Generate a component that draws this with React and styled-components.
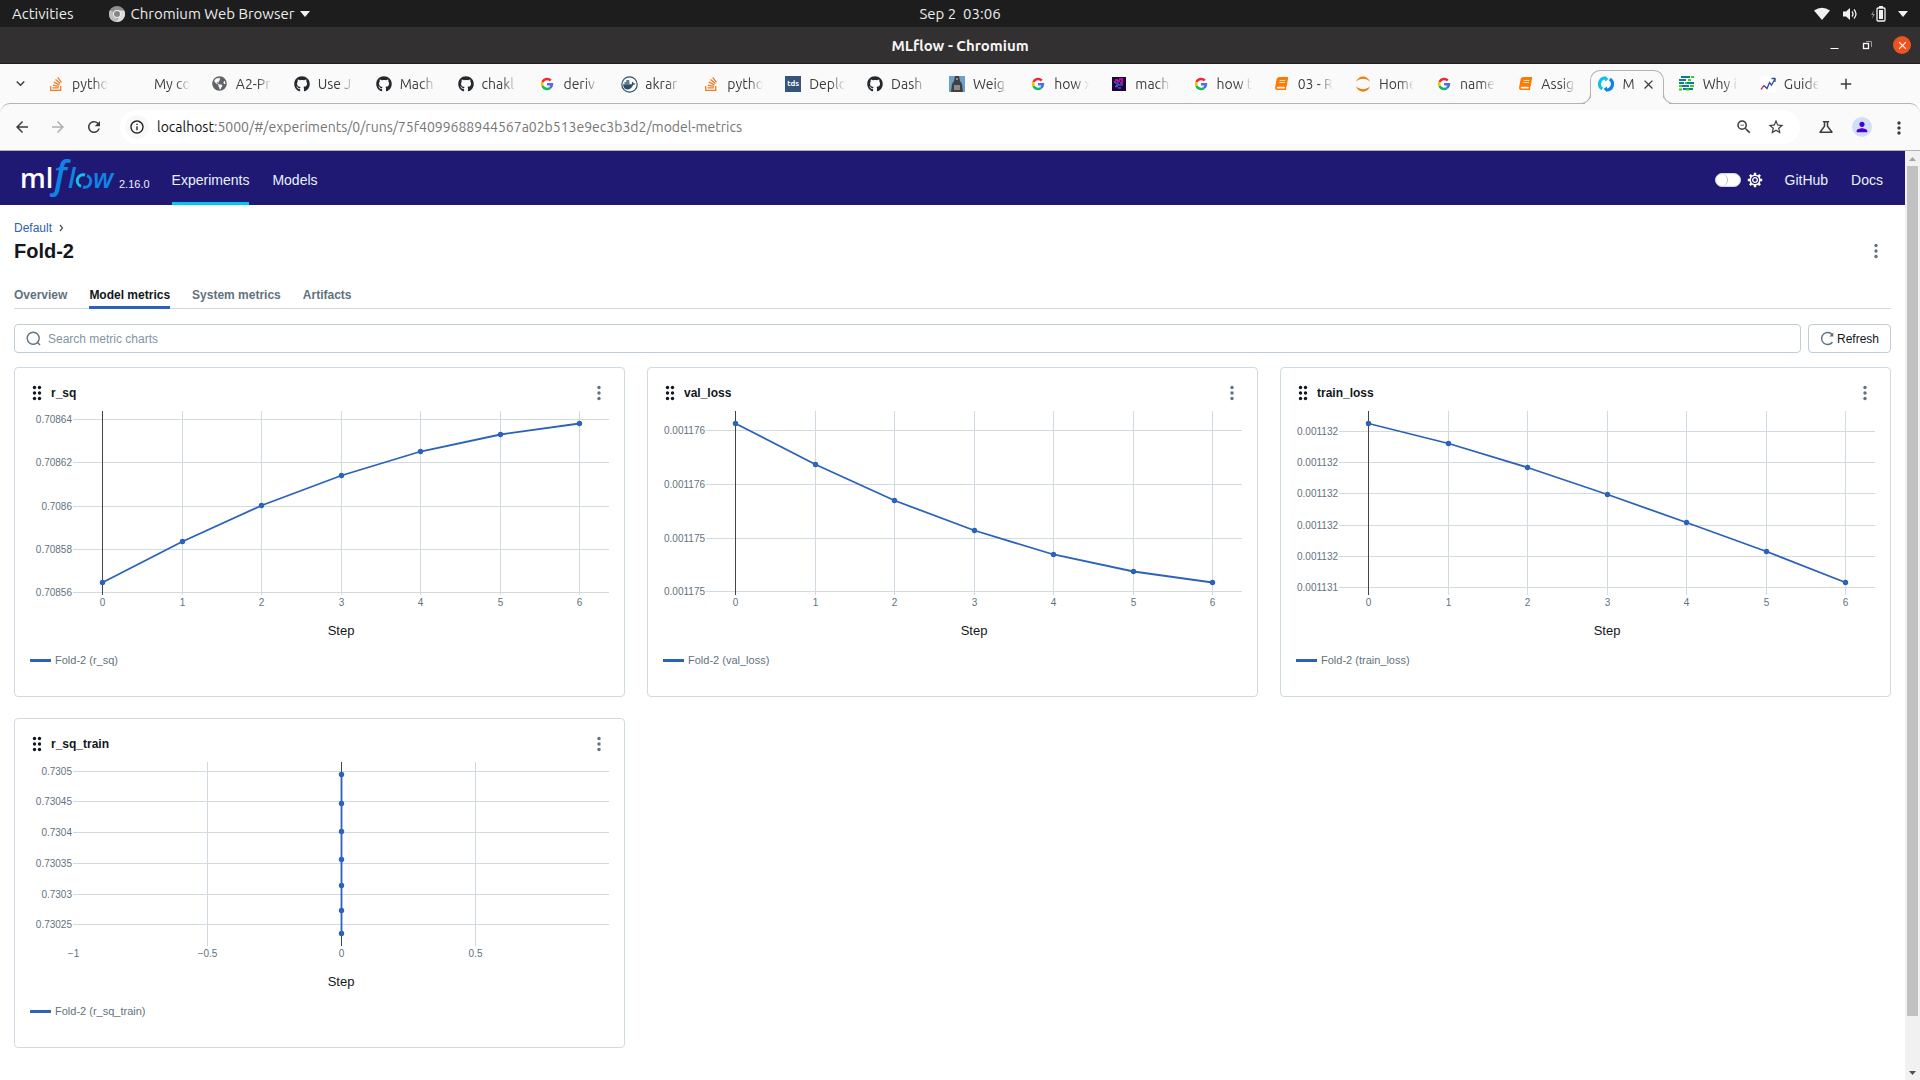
import React, { useLayoutEffect, useRef, useState } from "react";
import styled, { createGlobalStyle, css } from "styled-components";
import { FaStackOverflow, FaGithub, FaGlobeAmericas, FaBook } from "react-icons/fa";
import {
  MdArrowBack, MdArrowForward, MdRefresh, MdInfoOutline, MdZoomOut, MdStarOutline,
  MdOutlineScience, MdPerson, MdMoreVert, MdKeyboardArrowDown, MdAdd, MdClose,
} from "react-icons/md";

const systemFont = `"Ubuntu", "Open Sans", "Noto Sans", sans-serif`;
const pageFont = `"Liberation Sans", Arial, sans-serif`;

const color = {
  chrome: "#fafafa",
  chromeLine: "#b3b3b3",
  nav: "#201974",
  line: "#d1d9e1",
  field: "#c0cdd8",
  blue: "#2b62ba",
  text: "#11171c",
  muted: "#5f7281",
};

const GlobalStyle = createGlobalStyle`
  *, *::before, *::after { box-sizing: border-box; }
  body { margin: 0; background: #fff; }
  button { border: 0; margin: 0; padding: 0; background: none; font: inherit; color: inherit; cursor: pointer; }
  a { text-decoration: none; color: inherit; }
  h1, h2 { margin: 0; }
  svg { display: block; flex: none; }
`;

const Screen = styled.div`
  display: flex;
  flex-direction: column;
  height: 100vh;
  overflow: hidden;
  font-family: ${systemFont};
`;

/* ---------- desktop bar ---------- */

const DesktopBar = styled.div`
  display: grid;
  grid-template-columns: 1fr auto 1fr;
  align-items: center;
  height: 27px;
  flex: none;
  padding: 0 12px;
  background: #1d1d1d;
  color: #ececec;
  font-size: 15px;
  white-space: pre;
`;

const DesktopSide = styled.div`
  display: flex;
  align-items: center;
  gap: ${(p) => p.$gap}px;
  justify-content: ${(p) => (p.$end ? "flex-end" : "flex-start")};
`;

const AppMenu = styled.button`
  display: flex;
  align-items: center;
  gap: 6px;
`;

const WindowBar = styled.div`
  display: grid;
  grid-template-columns: 1fr auto 1fr;
  align-items: center;
  height: 37px;
  flex: none;
  background: #333031;
  border-bottom: 1px solid #1f1d1e;
  color: #f6f5f4;
  font-size: 15px;
  font-weight: 700;
`;

const WindowButtons = styled.div`
  grid-column: 3;
  display: flex;
  justify-content: flex-end;
  align-items: center;
  gap: 18px;
  padding-right: 9px;
`;

const CloseWindow = styled.button`
  display: grid;
  place-items: center;
  width: 18px;
  height: 18px;
  border-radius: 50%;
  background: #e95420;
  color: #fff;
`;

/* ---------- browser tabs ---------- */

const TabStrip = styled.div`
  display: flex;
  align-items: stretch;
  height: 39px;
  flex: none;
  padding-right: 61px;
  background: ${color.chrome};
  color: #3c3c3c;
  font-size: 14px;
`;

const StripButton = styled.button`
  display: grid;
  place-items: center;
  width: ${(p) => p.$width}px;
  flex: none;
`;

const TabList = styled.div`
  display: flex;
  flex: 1;
  min-width: 0;
`;

const BrowserTab = styled.div`
  position: relative;
  display: flex;
  align-items: center;
  flex: 81 1 0;
  min-width: 0;
  margin: 6px 7px 0 0;
  padding: 0 7px 6px 8px;
  &:nth-child(-n + 11) { flex-grow: 82; }
  ${(p) => p.$active && css`
    z-index: 1;
    margin-bottom: -1px;
    padding: 0 5px 7px 7px;
    background: ${color.chrome};
    border: 1px solid ${color.chromeLine};
    border-bottom: 0;
    border-radius: 10px 10px 0 0;
    &::before, &::after {
      content: "";
      position: absolute;
      bottom: 0;
      width: 10px;
      height: 10px;
      border-bottom: 1px solid ${color.chromeLine};
    }
    &::before {
      right: 100%;
      border-right: 1px solid ${color.chromeLine};
      border-bottom-right-radius: 10px;
      box-shadow: 4px 4px 0 ${color.chrome};
      clip-path: inset(0 -1px 0 0);
    }
    &::after {
      left: 100%;
      border-left: 1px solid ${color.chromeLine};
      border-bottom-left-radius: 10px;
      box-shadow: -4px 4px 0 ${color.chrome};
      clip-path: inset(0 0 0 -1px);
    }
  `}
`;

const TabButton = styled.button`
  display: flex;
  align-items: center;
  gap: 8px;
  flex: 1;
  min-width: 0;
`;

const Favicon = styled.span`
  display: grid;
  place-items: center;
  width: 16px;
  height: 16px;
  flex: none;
`;

const TabTitle = styled.span`
  flex: 1;
  min-width: 0;
  white-space: nowrap;
  text-align: left;
  mask-image: linear-gradient(to right, #000 60%, transparent 100%);
`;

/* ---------- address bar ---------- */

const Toolbar = styled.div`
  display: flex;
  align-items: center;
  height: 48px;
  flex: none;
  padding: 0 13px 0 13px;
  background: ${color.chrome};
  border-top: 1px solid ${color.chromeLine};
  border-bottom: 1px solid ${color.chromeLine};
  border-radius: 10px 10px 0 0;
  color: #3c3c3c;
`;

const NavButtons = styled.div`
  display: flex;
  gap: 18px;
  padding-right: 17px;
`;

const ToolButtons = styled.div`
  display: flex;
  align-items: center;
  gap: 17px;
  padding-left: 17px;
`;

const IconButton = styled.button`
  display: grid;
  place-items: center;
  width: 18px;
  height: 18px;
  color: ${(p) => p.$color || "inherit"};
`;

const AddressBox = styled.div`
  display: flex;
  align-items: center;
  gap: 14px;
  flex: 1;
  height: 34px;
  padding: 0 15px 0 5px;
  border-radius: 17px;
  background: #fff;
`;

const InfoButton = styled.button`
  display: grid;
  place-items: center;
  width: 24px;
  height: 24px;
  border-radius: 50%;
  background: #f8f8f8;
  color: #1f1f1f;
`;

const Address = styled.div`
  flex: 1;
  margin-left: -6px;
  font-size: 14px;
  color: #757575;
  b { font-weight: 400; color: #111; }
`;

const Profile = styled.button`
  display: grid;
  place-items: center;
  width: 20px;
  height: 20px;
  border-radius: 50%;
  background: #d3defc;
  color: #4300d0;
`;

/* ---------- page ---------- */

const Viewport = styled.div`
  display: flex;
  flex: 1;
  min-height: 0;
  font-family: ${pageFont};
  font-size: 12px;
  color: ${color.text};
`;

const Page = styled.div`
  flex: 1;
  min-width: 0;
  overflow: hidden;
`;

const Header = styled.header`
  display: flex;
  align-items: stretch;
  height: 54px;
  padding: 0 22px 0 20px;
  background: ${color.nav};
  color: #e7f1fb;
  font-size: 14px;
`;

const Brand = styled.a`
  display: flex;
  align-items: center;
  gap: 3px;
`;

const Version = styled.span`
  padding-top: 11px;
  font-size: 11px;
`;

const HeaderLinks = styled.nav`
  display: flex;
  gap: 23px;
  padding-left: 22px;
  margin-right: ${(p) => (p.$end ? 0 : "auto")};
`;

const HeaderLink = styled.a`
  display: flex;
  align-items: center;
  padding-top: 6px;
  border-bottom: 3px solid ${(p) => (p.$active ? "#00c8f0" : "transparent")};
`;

const ThemeSwitch = styled.label`
  display: flex;
  align-items: center;
  gap: 6px;
  padding-top: 4px;
`;

const Switch = styled.input`
  appearance: none;
  width: 26px;
  height: 14px;
  margin: 0;
  border-radius: 7px;
  background: #fff;
  border: 1px solid #c9d5e0;
  &::before {
    content: "";
    display: block;
    width: 12px;
    height: 12px;
    border-radius: 50%;
    border-right: 1px solid #b4c0d0;
  }
`;

const Body = styled.main`
  padding: 15px 14px 32px 14px;
`;

const Breadcrumb = styled.nav`
  display: flex;
  align-items: center;
  gap: 5px;
  height: 16px;
  color: ${color.blue};
`;

const TitleRow = styled.div`
  display: flex;
  align-items: center;
  justify-content: space-between;
  height: 30px;
  padding-right: 8px;
`;

const Title = styled.h1`
  font-size: 20px;
  line-height: 24px;
`;

const PageTabs = styled.nav`
  display: flex;
  gap: 22px;
  margin-top: 17px;
  height: 26px;
  border-bottom: 1px solid ${color.line};
`;

const PageTab = styled.a`
  height: 26px;
  padding-top: 5px;
  line-height: 14px;
  font-weight: 700;
  color: ${(p) => (p.$active ? color.text : color.muted)};
  border-bottom: 3px solid ${(p) => (p.$active ? color.blue : "transparent")};
`;

const Controls = styled.div`
  display: flex;
  gap: 7px;
  margin: 15px 0 14px;
`;

const SearchField = styled.label`
  display: flex;
  align-items: center;
  gap: 7px;
  flex: 1;
  height: 29px;
  padding: 0 11px;
  border: 1px solid ${color.field};
  border-radius: 4px;
`;

const SearchInput = styled.input`
  flex: 1;
  min-width: 0;
  padding: 0;
  border: 0;
  outline: 0;
  background: none;
  font: inherit;
  color: ${color.text};
  &::placeholder { color: #8396a5; opacity: 1; }
`;

const RefreshButton = styled.button`
  display: flex;
  align-items: center;
  gap: 2px;
  height: 29px;
  padding: 0 11px;
  border: 1px solid ${color.field};
  border-radius: 4px;
`;

const ChartGrid = styled.div`
  display: grid;
  grid-template-columns: repeat(3, minmax(0, 1fr));
  gap: 21px 22px;
`;

const Card = styled.section`
  padding-bottom: 23px;
  border: 1px solid ${color.line};
  border-radius: 4px;
`;

const CardHeader = styled.div`
  display: flex;
  align-items: center;
  gap: 6px;
  height: 43px;
  padding: 7px 16px 0 14px;
`;

const CardTitle = styled.h2`
  flex: 1;
  font-size: 12px;
  line-height: 16px;
`;

const Plot = styled.div`
  height: 236px;
  overflow: hidden;
`;

const Legend = styled.div`
  display: flex;
  align-items: center;
  gap: 4px;
  height: 26px;
  padding-left: 15px;
  font-size: 11px;
  color: ${color.muted};
`;

const Swatch = styled.span`
  width: 21px;
  height: 3px;
  background: ${color.blue};
`;

/* ---------- scroll bar ---------- */

const ScrollBar = styled.div`
  display: flex;
  flex-direction: column;
  width: 15px;
  flex: none;
  background: #f1f1f1;
`;

const ScrollArrow = styled.div`
  display: grid;
  place-items: center;
  height: 15px;
`;

const Track = styled.div`
  display: flex;
  flex-direction: column;
  flex: 1;
  padding: 0 2px;
`;

const Thumb = styled.div`
  height: 94.6%;
  background: #c1c1c1;
`;

/* ---------- drawings ---------- */

const ChromiumIcon = () => (
  <svg width="16" height="16" viewBox="0 0 16 16">
    <circle cx="8" cy="8" r="8" fill="#8f8f8f" />
    <path d="M8 8 1 4a8 8 0 0 0 5.500 11.900L10 9.500z" fill="#bdbdbd" />
    <path d="M8 4.500h7.200a8 8 0 0 1-8.500 11.400L11 10z" fill="#dcdcdc" />
    <circle cx="8" cy="8" r="3.900" fill="#f0f0f0" />
    <circle cx="8" cy="8" r="3" fill="#858585" />
  </svg>
);

const Caret = ({ fill = "#f2f2f2" }) => (
  <svg width="10" height="6" viewBox="0 0 10 6">
    <path d="M0 0h10L5 6z" fill={fill} />
  </svg>
);

const WifiIcon = () => (
  <svg width="16" height="14" viewBox="0 0 16 14">
    <path d="M0 3.500Q8-2 16 3.500L8 13z" fill="#f2f2f2" />
  </svg>
);

const SoundIcon = () => (
  <svg width="16" height="14" viewBox="0 0 16 14" fill="none" stroke="#f2f2f2">
    <path d="M1 4.500h3L8 1v12L4 9.500H1z" fill="#f2f2f2" stroke="none" />
    <path d="M10 4.500q2 2.500 0 5M12 2.500q4 4.500 0 9" strokeWidth="1.300" />
  </svg>
);

const BatteryIcon = () => (
  <svg width="16" height="16" viewBox="0 0 16 16">
    <path d="M4 4 1 9h2l-1 4 3-5H3z" fill="#8c8c8c" />
    <path d="M9 0h4v2H9z" fill="#f2f2f2" />
    <rect x="7" y="2" width="8" height="13" rx="1" fill="none" stroke="#f2f2f2" strokeWidth="1.300" />
    <rect x="9" y="4" width="4" height="9" fill="#f2f2f2" />
  </svg>
);

const MinimizeIcon = () => (
  <svg width="15" height="15" viewBox="0 0 15 15"><path d="M3.500 10.500h8" stroke="#fff" /></svg>
);

const RestoreIcon = () => (
  <svg width="15" height="15" viewBox="0 0 15 15" fill="none" stroke="#fff">
    <rect x="3.500" y="5.500" width="5" height="5" strokeWidth="1.300" />
    <path d="M6 3.500h5.500V9" stroke="#9b9999" />
  </svg>
);

const GoogleIcon = () => (
  <svg width="16" height="16" viewBox="0 0 16 16" fill="none" strokeWidth="2.600">
    <circle cx="8" cy="8" r="8" fill="#fff" stroke="none" />
    <path d="M11.700 4.500A5 5 0 0 0 3.500 6" stroke="#f4243a" />
    <path d="M3.500 6a5 5 0 0 0 0 4" stroke="#fbbc05" />
    <path d="M3.500 10a5 5 0 0 0 7.500 2" stroke="#0ebc5f" />
    <path d="M11 12a5 5 0 0 0 1.900-3.800H8" stroke="#4a6cf7" />
  </svg>
);

const DockerCircle = () => (
  <svg width="17" height="17" viewBox="0 0 17 17">
    <circle cx="8.500" cy="8.500" r="7.700" fill="#fff" stroke="#2f5069" strokeWidth="1.200" />
    <path d="M2 8.200h8.500c.8-.3.600-1.600.2-2.200 1-.6 1.600.6 1.700 1.300.8-.2 1.600 0 2.100.5-.6.8-1.500 1-2.300 1C11 12 9 13.500 6.500 13.500S2.300 11.500 2 8.200z" fill="#2f5069" />
    <path d="M3.500 6.200h5v1.500h-5zM5.300 4.300h3v1.400h-3z" fill="#2f5069" />
  </svg>
);

const TdsIcon = styled.span`
  display: grid;
  place-items: center;
  width: 16px;
  height: 16px;
  background: #35547c;
  color: #fff;
  font-size: 8px;
  font-weight: 700;
`;

const StatueIcon = () => (
  <svg width="16" height="16" viewBox="0 0 16 16">
    <path fill="#6f9fca" d="M0 0h16v16H0z" />
    <path d="M6 0h4l1 5 2 3 1 8H2l1-8 2-3z" fill="#3f4042" />
    <path d="M5 9h6v5H5z" fill="#8d8a84" />
    <path d="M7 2h2v2H7z" fill="#8d8a84" />
  </svg>
);

const NeonIcon = () => (
  <svg width="14" height="14" viewBox="0 0 14 14">
    <path fill="#1d0636" d="M0 0h14v14H0z" />
    <path d="M3 3h3M7 2h4M2 5h2M5 4h3M9 4h2M8 6h3" stroke="#d815c9" strokeWidth="1.300" />
    <path d="M3 6h4M4 8h5M3 9.500h3M6 11h3M9 8h2" stroke="#3f52d8" strokeWidth="1.300" />
  </svg>
);

const JupyterIcon = () => (
  <svg width="16" height="16" viewBox="0 0 16 16" fill="#f77a0c">
    <path d="M1 6C3-1.500 13-1.500 15 6 11.500 1.800 4.500 1.800 1 6zM1 10c2 7.500 12 7.500 14 0-3.500 4.200-10.500 4.200-14 0z" />
  </svg>
);

const SwirlIcon = () => (
  <svg width="16" height="16" viewBox="0 0 16 16" fill="none" strokeWidth="3.200">
    <path d="M4.200 13A6 6 0 0 1 7.500 2" stroke="#12bfee" />
    <path d="M11.800 3A6 6 0 0 1 8.500 14" stroke="#0f83e6" />
    <path d="M7 0v5.500L10.500 3z" fill="#12bfee" />
    <path d="M9 16v-5.500L5.500 13z" fill="#0f83e6" />
  </svg>
);

const StripesIcon = () => (
  <svg width="15" height="15" viewBox="0 0 15 15" strokeWidth="2">
    <path d="M2 1h9M0 4h7M0 7h5M8 7h7M3 10h7M4 13h10" stroke="#0e7d91" />
    <path d="M12 1h3M9 4h3M6 7h2M0 10h3M11 10h4M0 13.500h3M7 13.500h3" stroke="#2fd22d" />
  </svg>
);

const TrendIcon = () => (
  <svg width="16" height="16" viewBox="0 0 16 16" fill="none" strokeWidth="1.300">
    <path fill="#fff" d="M0 0h16v16H0z" />
    <path d="m1 13.500 3-4" stroke="#d9234c" />
    <path d="m4 9.500 3 3 2.500-6 2 2.500L15 3" stroke="#334a9c" />
    <path d="M11.500 2.500H15V6" stroke="#334a9c" />
  </svg>
);

const Logo = () => (
  <svg width="96" height="42" viewBox="0 0 96 42">
    <g fontFamily="Open Sans, Noto Sans, sans-serif">
      <text x="0" y="31" fontSize="27" fontWeight="600" fill="#fff">ml</text>
      <g fill="#1083e5" fontStyle="italic" fontWeight="600">
        <text x="34" y="31" fontSize="37">f</text>
        <text x="48" y="31" fontSize="27">l</text>
        <text x="73" y="31" fontSize="27">w</text>
      </g>
    </g>
    <g fill="none" strokeWidth="3">
      <path d="M61 29.300A6 6 0 0 1 65 18" stroke="#14c0f0" />
      <path d="M67 18.700A6 6 0 0 1 63 30" stroke="#1083e5" />
    </g>
  </svg>
);

const SunIcon = () => (
  <svg width="16" height="16" viewBox="0 0 16 16" fill="none" stroke="#fff">
    <circle cx="8" cy="8" r="4.800" strokeWidth="1.600" />
    <circle cx="8" cy="8" r="2.300" strokeWidth="1.300" />
    <path d="M8 .8v2.400M8 12.800v2.400M.8 8h2.400M12.800 8h2.400M2.900 2.900l1.700 1.700M11.400 11.400l1.700 1.700M2.900 13.100l1.700-1.700M11.400 4.600l1.700-1.700" strokeWidth="2.400" />
  </svg>
);

const DotsIcon = ({ columns = 1, fill = color.muted }) => (
  <svg width={columns === 2 ? 16 : 14} height="16" viewBox={columns === 2 ? "0 0 16 16" : "0 0 14 16"} fill={fill}>
    {[2.5, 8, 13.5].map((y) =>
      (columns === 2 ? [5.5, 10.5] : [7]).map((x) => <circle key={`${x}-${y}`} cx={x} cy={y} r="1.700" />)
    )}
  </svg>
);

const ChevronIcon = () => (
  <svg width="8" height="8" viewBox="0 0 8 8" fill="none" stroke="#445461" strokeWidth="1.200">
    <path d="m3 1 2.500 3L3 7" />
  </svg>
);

const SearchIcon = () => (
  <svg width="15" height="15" viewBox="0 0 15 15" fill="none" stroke={color.muted} strokeWidth="1.400">
    <circle cx="7.200" cy="7.200" r="6" />
    <path d="m11 11 3 3" />
  </svg>
);

const RefreshIcon = () => (
  <svg width="15" height="15" viewBox="0 0 15 15" fill="none" stroke={color.muted} strokeWidth="1.400">
    <path d="M12.500 11A6 6 0 1 1 12.500 4" />
    <path d="M13.300 1.500v4h-4z" fill={color.muted} stroke="none" />
  </svg>
);

/* ---------- chart ---------- */

const PLOT_HEIGHT = 184;
const PLOT_LEFT = 58;
const PLOT_RIGHT = 15;

function MetricChart({ chart }) {
  const holder = useRef(null);
  const [width, setWidth] = useState(609);

  useLayoutEffect(() => {
    const measure = () => setWidth(Math.floor(holder.current.clientWidth));
    measure();
    const observer = new ResizeObserver(measure);
    observer.observe(holder.current);
    return () => observer.disconnect();
  }, []);

  const right = width - PLOT_RIGHT;
  const [min, max] = chart.domain;
  const x = (v) => PLOT_LEFT + ((v - min) / (max - min)) * (right - PLOT_LEFT);
  const crisp = (v) => Math.floor(v) + 0.5;
  const points = chart.points.map(([px, py]) => [crisp(x(px)), py + 0.5]);

  return (
    <Plot ref={holder}>
      <svg width={width} height="236" fontFamily="Liberation Sans, Arial, sans-serif">
        <g stroke={color.line}>
          {chart.xTicks.filter((t) => t > min).map((t) => (
            <path key={t} d={`M${crisp(x(t))} 0V${PLOT_HEIGHT}`} />
          ))}
          {chart.yTicks.map(([, y]) => (
            <path key={y} d={`M${PLOT_LEFT} ${y + 0.5}H${right}`} />
          ))}
          <path d={`M${crisp(x(0))} 0V${PLOT_HEIGHT}`} stroke="#444" />
        </g>
        <polyline points={points.map((p) => p.join()).join(" ")} fill="none" stroke={color.blue} strokeWidth="1.800" />
        {points.map(([px, py]) => <circle key={py} cx={px} cy={py} r="2.700" fill={color.blue} />)}
        <g fontSize="10" fill={color.muted}>
          {chart.yTicks.map(([label, y]) => (
            <text key={y} x={PLOT_LEFT - 1} y={y + 4} textAnchor="end">{label}</text>
          ))}
          {chart.xTicks.map((t) => (
            <text key={t} x={crisp(x(t))} y="195" textAnchor="middle">{String(t).replace("-", "−")}</text>
          ))}
        </g>
        <text x={(PLOT_LEFT + right) / 2} y="224" fontSize="13" textAnchor="middle" fill={color.text}>Step</text>
      </svg>
    </Plot>
  );
}

const steps = [0, 1, 2, 3, 4, 5, 6];
const stepDomain = [-0.376, 6.37];
const series = (ys) => ys.map((y, i) => [i, y]);

const charts = [
  {
    name: "r_sq", domain: stepDomain, xTicks: steps,
    yTicks: [["0.70864", 8], ["0.70862", 51], ["0.7086", 95], ["0.70858", 138], ["0.70856", 181]],
    points: series([171, 130, 94, 64, 40, 23, 12]),
  },
  {
    name: "val_loss", domain: stepDomain, xTicks: steps,
    yTicks: [["0.001176", 19], ["0.001176", 73], ["0.001175", 127], ["0.001175", 180]],
    points: series([12, 53, 89, 119, 143, 160, 171]),
  },
  {
    name: "train_loss", domain: stepDomain, xTicks: steps,
    yTicks: [["0.001132", 20], ["0.001132", 51], ["0.001132", 82], ["0.001132", 114], ["0.001132", 145], ["0.001131", 176]],
    points: series([12, 32, 56, 83, 111, 140, 171]),
  },
  {
    name: "r_sq_train", domain: [-1, 1], xTicks: [-1, -0.5, 0, 0.5],
    yTicks: [["0.7305", 9], ["0.73045", 39], ["0.7304", 70], ["0.73035", 101], ["0.7303", 132], ["0.73025", 162]],
    points: [12, 41, 69, 97, 123, 148, 171].map((y) => [0, y]),
  },
];

const stack = <FaStackOverflow size={16} color="#f27a24" />;
const github = <FaGithub size={16} color="#24292f" />;
const book = <FaBook size={13} color="#ff7a00" style={{ transform: "skewX(-10deg)" }} />;
const google = <GoogleIcon />;

const browserTabs = [
  ["pytho", stack], ["My co", null], ["A2-Pr", <FaGlobeAmericas size={15} color="#5f6368" />],
  ["Use J", github], ["Mach", github], ["chakl", github], ["deriv", google],
  ["akrar", <DockerCircle />], ["pytho", stack], ["Deplo", <TdsIcon>tds</TdsIcon>], ["Dash", github],
  ["Weig", <StatueIcon />], ["how x", google], ["mach", <NeonIcon />], ["how t", google],
  ["03 - R", book], ["Home", <JupyterIcon />], ["name", google], ["Assig", book],
  ["M", <SwirlIcon />, true], ["Why i", <StripesIcon />], ["Guide", <TrendIcon />],
];

export default function App() {
  return (
    <Screen>
      <GlobalStyle />
      <DesktopBar>
        <DesktopSide $gap={35}>
          <button type="button">Activities</button>
          <AppMenu type="button"><ChromiumIcon />Chromium Web Browser<Caret /></AppMenu>
        </DesktopSide>
        <span>{"Sep 2  03:06"}</span>
        <DesktopSide $gap={12} $end>
          <WifiIcon /><SoundIcon /><BatteryIcon /><Caret />
        </DesktopSide>
      </DesktopBar>

      <WindowBar>
        <span />
        <span>MLflow - Chromium</span>
        <WindowButtons>
          <button type="button" aria-label="Minimize"><MinimizeIcon /></button>
          <button type="button" aria-label="Restore"><RestoreIcon /></button>
          <CloseWindow type="button" aria-label="Close window"><MdClose size={13} /></CloseWindow>
        </WindowButtons>
      </WindowBar>

      <TabStrip>
        <StripButton type="button" $width={40} aria-label="Search tabs"><MdKeyboardArrowDown size={17} /></StripButton>
        <TabList>
          {browserTabs.map(([title, icon, active], i) => (
            <BrowserTab key={i} $active={active}>
              <TabButton type="button">
                <Favicon>{icon}</Favicon>
                <TabTitle>{title}</TabTitle>
              </TabButton>
              {active && <IconButton type="button" aria-label="Close tab"><MdClose size={15} /></IconButton>}
            </BrowserTab>
          ))}
        </TabList>
        <StripButton type="button" $width={26} aria-label="New tab"><MdAdd size={18} /></StripButton>
      </TabStrip>

      <Toolbar>
        <NavButtons>
          <IconButton type="button" aria-label="Back"><MdArrowBack size={18} /></IconButton>
          <IconButton type="button" aria-label="Forward" $color="#b0b0b0"><MdArrowForward size={18} /></IconButton>
          <IconButton type="button" aria-label="Reload"><MdRefresh size={18} /></IconButton>
        </NavButtons>
        <AddressBox>
          <InfoButton type="button" aria-label="Site information"><MdInfoOutline size={16} /></InfoButton>
          <Address><b>localhost</b>:5000/#/experiments/0/runs/75f4099688944567a02b513e9ec3b3d2/model-metrics</Address>
          <IconButton type="button" aria-label="Zoom"><MdZoomOut size={18} /></IconButton>
          <IconButton type="button" aria-label="Bookmark"><MdStarOutline size={18} /></IconButton>
        </AddressBox>
        <ToolButtons>
          <IconButton type="button" aria-label="Experiments"><MdOutlineScience size={18} /></IconButton>
          <Profile type="button" aria-label="Profile"><MdPerson size={16} /></Profile>
          <IconButton type="button" aria-label="Browser menu"><MdMoreVert size={20} /></IconButton>
        </ToolButtons>
      </Toolbar>

      <Viewport>
        <Page>
          <Header>
            <Brand href="#/" aria-label="MLflow home"><Logo /><Version>2.16.0</Version></Brand>
            <HeaderLinks>
              <HeaderLink href="#/experiments" $active>Experiments</HeaderLink>
              <HeaderLink href="#/models">Models</HeaderLink>
            </HeaderLinks>
            <ThemeSwitch>
              <Switch type="checkbox" role="switch" aria-label="Dark theme" />
              <SunIcon />
            </ThemeSwitch>
            <HeaderLinks $end>
              <HeaderLink href="#github">GitHub</HeaderLink>
              <HeaderLink href="#docs">Docs</HeaderLink>
            </HeaderLinks>
          </Header>

          <Body>
            <Breadcrumb><a href="#/experiments/0">Default</a><ChevronIcon /></Breadcrumb>
            <TitleRow>
              <Title>Fold-2</Title>
              <button type="button" aria-label="Run menu"><DotsIcon /></button>
            </TitleRow>
            <PageTabs>
              <PageTab href="#overview">Overview</PageTab>
              <PageTab href="#model-metrics" $active>Model metrics</PageTab>
              <PageTab href="#system-metrics">System metrics</PageTab>
              <PageTab href="#artifacts">Artifacts</PageTab>
            </PageTabs>
            <Controls>
              <SearchField>
                <SearchIcon />
                <SearchInput placeholder="Search metric charts" aria-label="Search metric charts" />
              </SearchField>
              <RefreshButton type="button"><RefreshIcon />Refresh</RefreshButton>
            </Controls>
            <ChartGrid>
              {charts.map((chart) => (
                <Card key={chart.name}>
                  <CardHeader>
                    <DotsIcon columns={2} fill={color.text} />
                    <CardTitle>{chart.name}</CardTitle>
                    <IconButton type="button" aria-label={`${chart.name} menu`} $color={color.muted}><DotsIcon /></IconButton>
                  </CardHeader>
                  <MetricChart chart={chart} />
                  <Legend><Swatch />Fold-2 ({chart.name})</Legend>
                </Card>
              ))}
            </ChartGrid>
          </Body>
        </Page>
        <ScrollBar>
          <ScrollArrow><svg width="7" height="4" viewBox="0 0 7 4"><path d="M0 4h7L3.500 0z" fill="#a3a3a3" /></svg></ScrollArrow>
          <Track><Thumb /></Track>
          <ScrollArrow><svg width="7" height="4" viewBox="0 0 7 4"><path d="M0 0h7L3.500 4z" fill="#505050" /></svg></ScrollArrow>
        </ScrollBar>
      </Viewport>
    </Screen>
  );
}
